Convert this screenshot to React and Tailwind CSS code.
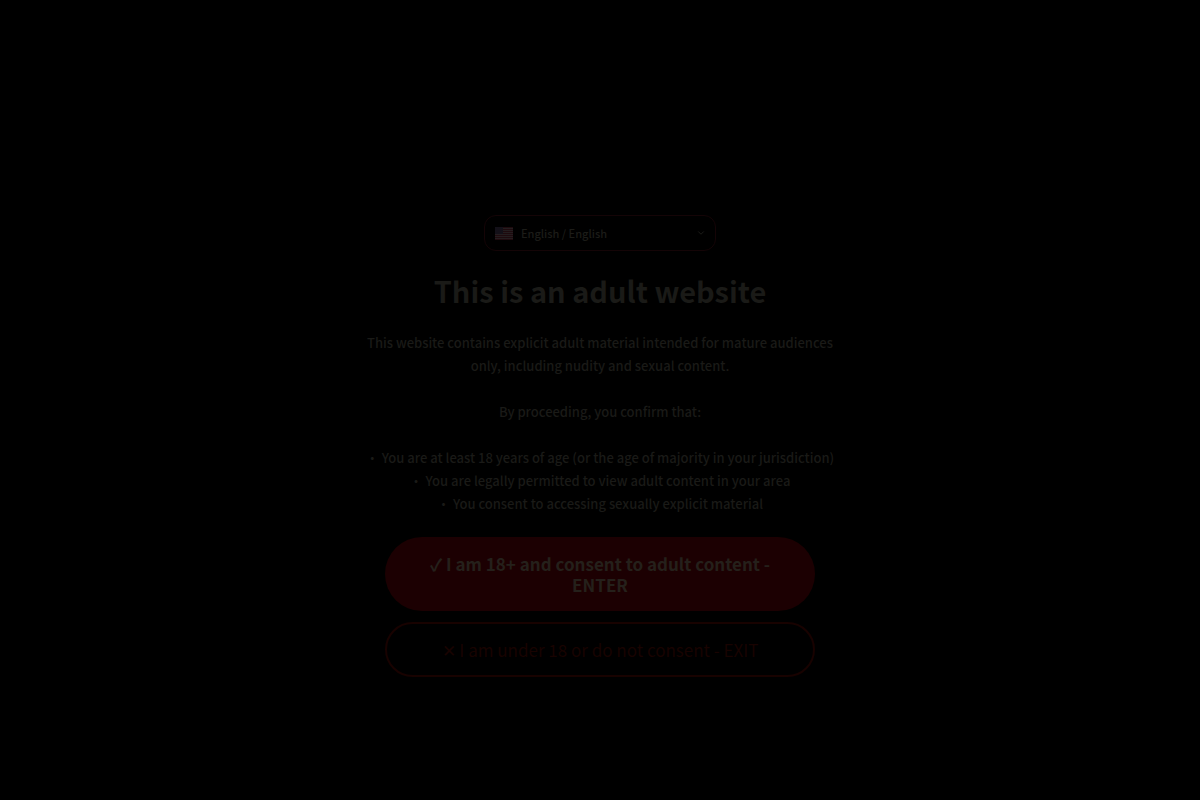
import React, { useState } from 'react';
import { FiChevronDown } from 'react-icons/fi';

const conditions = [
  'You are at least 18 years of age (or the age of majority in your jurisdiction)',
  'You are legally permitted to view adult content in your area',
  'You consent to accessing sexually explicit material',
];

const FlagUS = () => (
  <svg viewBox="0 0 18 13" className="pointer-events-none absolute left-[11px] h-[13px] w-[18px]" aria-hidden="true">
    <rect width="18" height="13" fill="#241d1f" />
    {[0, 2, 4, 6, 8, 10, 12].map((y) => (
      <rect key={y} y={y} width="18" height="1" fill="#1e0a0e" />
    ))}
    <rect width="8" height="7" fill="#131018" />
  </svg>
);

const LanguageSelect = () => {
  const [language, setLanguage] = useState('en');

  return (
    <div className="relative flex w-58 items-center">
      <FlagUS />
      <select
        aria-label="Language"
        value={language}
        onChange={(e) => setLanguage(e.target.value)}
        className="h-9 w-full appearance-none rounded-xl border border-[#140406] bg-transparent pr-8 pl-9 text-[11px] font-medium text-[#1c1c18]"
      >
        <option value="en">English / English</option>
      </select>
      <FiChevronDown className="pointer-events-none absolute right-2.5 h-2.5 w-2.5 text-[#22221e]" />
    </div>
  );
};

const App = () => {
  return (
    <main className="flex min-h-screen flex-col items-center justify-center bg-black px-4 pt-[92px] text-center font-['Noto_Sans_CJK_SC',sans-serif] text-[#1a1a17]">
      <div className="flex w-full max-w-[480px] flex-col items-center">
        <LanguageSelect />

        <h1 className="mt-[18px] text-[29px] leading-[42px] font-bold">This is an adult website</h1>

        {/* Warning text */}
        <div className="mt-5 text-[13px] leading-[23px] font-medium">
          <p>
            This website contains explicit adult material intended for mature audiences only, including nudity and
            sexual content.
          </p>
          <p className="mt-[23px]">By proceeding, you confirm that:</p>
          <ul className="mt-[23px]">
            {conditions.map((item) => (
              <li key={item}>• {item}</li>
            ))}
          </ul>
        </div>

        {/* Actions */}
        <div className="mt-[22px] flex w-full max-w-[430px] flex-col gap-[11px]">
          <button className="rounded-full bg-[#1c0002] px-10 py-4 text-[17px] leading-[21px] font-bold text-[#25201b]">
            ✓ I am 18+ and consent to adult content - ENTER
          </button>
          <button className="rounded-full border-2 border-[#180200] px-8 py-4 text-[17px] leading-[19px] text-[#180301]">
            ✕ I am under 18 or do not consent - EXIT
          </button>
        </div>
      </div>
    </main>
  );
};

export default App;
